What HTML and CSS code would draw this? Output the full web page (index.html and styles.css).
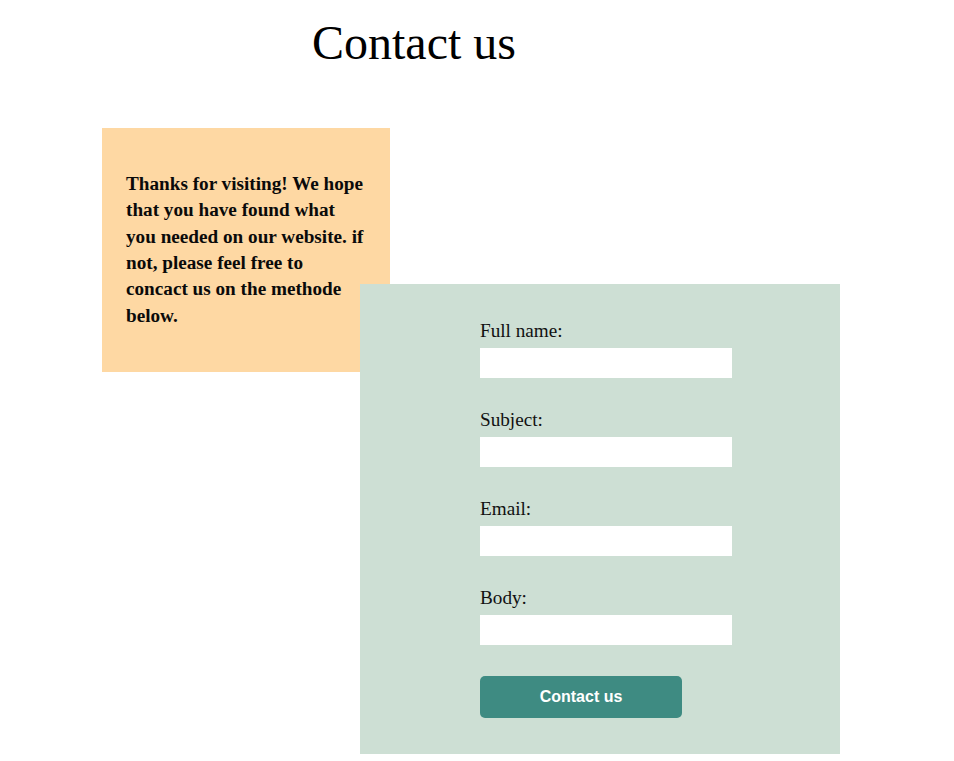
FILE: index.html
```html
<!DOCTYPE html>
<html lang="en">
<head>
<meta charset="utf-8">
<title>Contact us</title>
<link rel="stylesheet" href="styles.css">
</head>
<body>
  <header class="page-header">
    <h1 class="title">Contact us</h1>
  </header>
  <main class="layout">
    <section class="note">
      <p class="note-text">Thanks for visiting! We hope that you have found what you needed on our website. if not, please feel free to concact us on the methode below.</p>
    </section>
    <form class="contact-form">
      <label class="field">
        <span class="field-label">Full name:</span>
        <input class="field-input" type="text">
      </label>
      <label class="field">
        <span class="field-label">Subject:</span>
        <input class="field-input" type="text">
      </label>
      <label class="field">
        <span class="field-label">Email:</span>
        <input class="field-input" type="email">
      </label>
      <label class="field">
        <span class="field-label">Body:</span>
        <input class="field-input" type="text">
      </label>
      <button class="submit" type="button">Contact us</button>
    </form>
  </main>
</body>
</html>
```
FILE: styles.css
```css
html, body {
  margin: 0;
  padding: 0;
  background: #ffffff;
  font-family: "Liberation Serif", "Times New Roman", serif;
  color: #000000;
}

.page-header {
  width: 828px;
  text-align: center;
}

.title {
  margin: 15px 0 0;
  font-size: 48px;
  font-weight: normal;
  line-height: 55px;
}

.layout {
  margin-top: 58px;
  padding-left: 102px;
  display: grid;
  grid-template-columns: 258px 30px 450px;
  grid-template-rows: 156px 88px auto;
}

.note {
  grid-column: 1 / 3;
  grid-row: 1 / 3;
  background: #fed8a3;
  padding: 0 24px;
  display: flex;
  align-items: center;
}

.note-text {
  margin: 0;
  font-size: 19.2px;
  line-height: 26.4px;
  font-weight: bold;
  color: #0a0a0a;
}

.contact-form {
  grid-column: 2 / 4;
  grid-row: 2 / 4;
  background: #cddfd4;
  padding: 36px 0 36px 120px;
  display: flex;
  flex-direction: column;
  align-items: flex-start;
}

.field {
  display: flex;
  flex-direction: column;
  gap: 6px;
  margin-bottom: 31px;
}

.field-label {
  font-size: 19.2px;
  line-height: 22px;
  color: #111111;
}

.field-input {
  width: 252px;
  height: 30px;
  box-sizing: border-box;
  border: none;
  background: #ffffff;
  margin: 0;
  padding: 0 6px;
}

.submit {
  width: 202px;
  height: 42px;
  border: none;
  border-radius: 5px;
  background: #3e8b82;
  color: #ffffff;
  font-family: "Liberation Sans", Arial, sans-serif;
  font-weight: bold;
  font-size: 16px;
  cursor: pointer;
}
```
